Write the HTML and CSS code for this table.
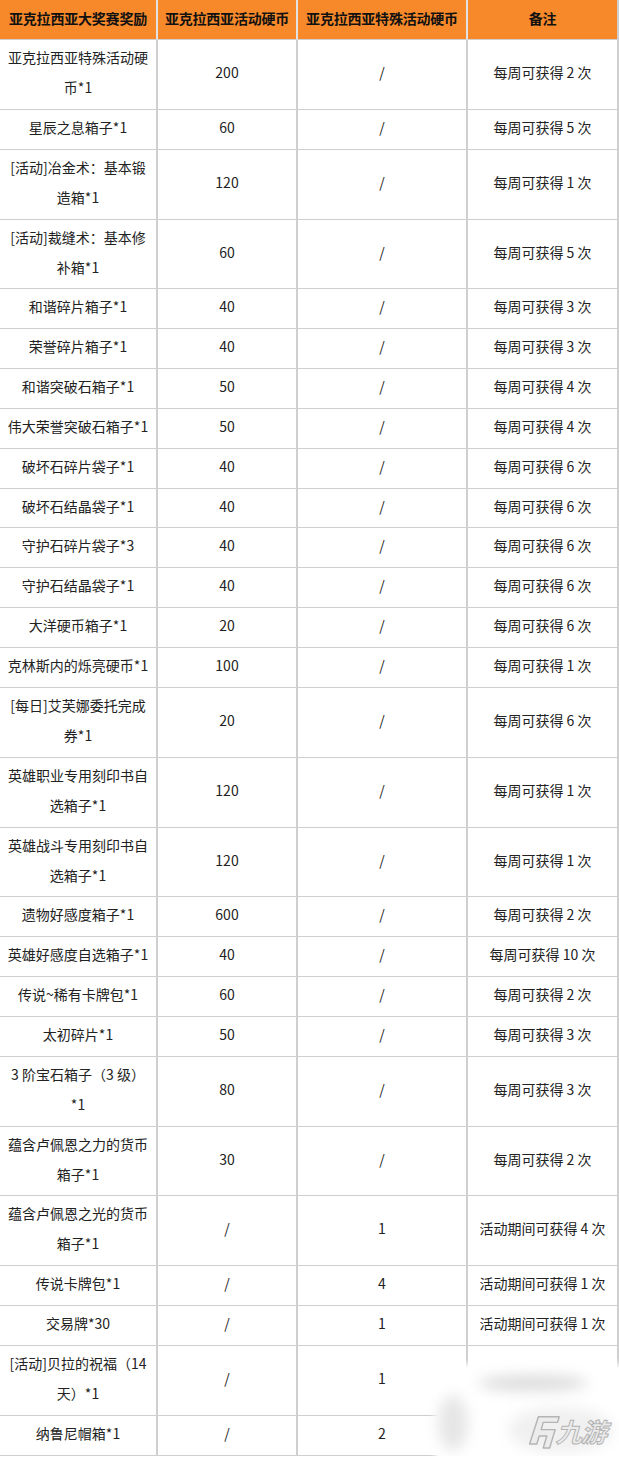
FILE: index.html
```html
<!DOCTYPE html>
<html lang="zh-CN">
<head>
<meta charset="utf-8">
<title>亚克拉西亚大奖赛奖励</title>
<link rel="stylesheet" href="styles.css">
</head>
<body>
<div class="page">
<table class="rewards">
  <colgroup>
    <col class="c1"><col class="c2"><col class="c3"><col class="c4">
  </colgroup>
  <thead>
    <tr><th>亚克拉西亚大奖赛奖励</th><th>亚克拉西亚活动硬币</th><th>亚克拉西亚特殊活动硬币</th><th>备注</th></tr>
  </thead>
  <tbody>
    <tr><td>亚克拉西亚特殊活动硬<br>币*1</td><td>200</td><td>/</td><td>每周可获得 2 次</td></tr>
    <tr><td>星辰之息箱子*1</td><td>60</td><td>/</td><td>每周可获得 5 次</td></tr>
    <tr><td>[活动]冶金术：基本锻<br>造箱*1</td><td>120</td><td>/</td><td>每周可获得 1 次</td></tr>
    <tr><td>[活动]裁缝术：基本修<br>补箱*1</td><td>60</td><td>/</td><td>每周可获得 5 次</td></tr>
    <tr><td>和谐碎片箱子*1</td><td>40</td><td>/</td><td>每周可获得 3 次</td></tr>
    <tr><td>荣誉碎片箱子*1</td><td>40</td><td>/</td><td>每周可获得 3 次</td></tr>
    <tr><td>和谐突破石箱子*1</td><td>50</td><td>/</td><td>每周可获得 4 次</td></tr>
    <tr><td>伟大荣誉突破石箱子*1</td><td>50</td><td>/</td><td>每周可获得 4 次</td></tr>
    <tr><td>破坏石碎片袋子*1</td><td>40</td><td>/</td><td>每周可获得 6 次</td></tr>
    <tr><td>破坏石结晶袋子*1</td><td>40</td><td>/</td><td>每周可获得 6 次</td></tr>
    <tr><td>守护石碎片袋子*3</td><td>40</td><td>/</td><td>每周可获得 6 次</td></tr>
    <tr><td>守护石结晶袋子*1</td><td>40</td><td>/</td><td>每周可获得 6 次</td></tr>
    <tr><td>大洋硬币箱子*1</td><td>20</td><td>/</td><td>每周可获得 6 次</td></tr>
    <tr><td>克林斯内的烁亮硬币*1</td><td>100</td><td>/</td><td>每周可获得 1 次</td></tr>
    <tr><td>[每日]艾芙娜委托完成<br>券*1</td><td>20</td><td>/</td><td>每周可获得 6 次</td></tr>
    <tr><td>英雄职业专用刻印书自<br>选箱子*1</td><td>120</td><td>/</td><td>每周可获得 1 次</td></tr>
    <tr><td>英雄战斗专用刻印书自<br>选箱子*1</td><td>120</td><td>/</td><td>每周可获得 1 次</td></tr>
    <tr><td>遗物好感度箱子*1</td><td>600</td><td>/</td><td>每周可获得 2 次</td></tr>
    <tr><td>英雄好感度自选箱子*1</td><td>40</td><td>/</td><td>每周可获得 10 次</td></tr>
    <tr><td>传说~稀有卡牌包*1</td><td>60</td><td>/</td><td>每周可获得 2 次</td></tr>
    <tr><td>太初碎片*1</td><td>50</td><td>/</td><td>每周可获得 3 次</td></tr>
    <tr><td>3 阶宝石箱子（3 级）<br>*1</td><td>80</td><td>/</td><td>每周可获得 3 次</td></tr>
    <tr><td>蕴含卢佩恩之力的货币<br>箱子*1</td><td>30</td><td>/</td><td>每周可获得 2 次</td></tr>
    <tr><td>蕴含卢佩恩之光的货币<br>箱子*1</td><td>/</td><td>1</td><td>活动期间可获得 4 次</td></tr>
    <tr><td>传说卡牌包*1</td><td>/</td><td>4</td><td>活动期间可获得 1 次</td></tr>
    <tr><td>交易牌*30</td><td>/</td><td>1</td><td>活动期间可获得 1 次</td></tr>
    <tr><td>[活动]贝拉的祝福（14<br>天）*1</td><td>/</td><td>1</td><td></td></tr>
    <tr><td>纳鲁尼帽箱*1</td><td>/</td><td>2</td><td></td></tr>
  </tbody>
</table>
<div class="watermark">
  <span class="smudge s1"></span>
  <span class="smudge s2"></span>
  <span class="smudge s3"></span>
  <svg class="wm-logo" viewBox="0 0 40 42" width="32" height="40" aria-hidden="true">
    <path d="M13 2 L39 2 L37 9 L19 9 L16.5 18 L34 18 L27 41 L19 41 L23.5 26 L14 26 L11 36 L2 36 Z" fill="#ececec" stroke="#b4b4b4" stroke-width="1.8" stroke-linejoin="round"/>
  </svg>
  <span class="wm-text">九游</span>
</div>
</div>
</body>
</html>
```
FILE: styles.css
```css
html, body {
  margin: 0;
  padding: 0;
  background: #fff;
}
.page {
  position: relative;
  width: 619px;
}
.rewards {
  width: 619px;
  table-layout: fixed;
  border-collapse: separate;
  border-spacing: 0;
  font-family: "Noto Sans CJK SC", "Noto Sans", sans-serif;
  font-size: 14px;
  color: #222;
}
.c1 { width: 158px; }
.c2 { width: 140px; }
.c3 { width: 170px; }
.c4 { width: 151px; }
.rewards th,
.rewards td {
  box-sizing: border-box;
  text-align: center;
  vertical-align: middle;
  line-height: 30px;
  padding: 2px 5px 6.85px;
  border-right: 2px solid #cfcfcf;
  border-bottom: 1px solid #cfcfcf;
  white-space: nowrap;
}
.rewards th {
  background: #f7892b;
  color: #111;
  font-weight: 700;
  padding: 3px 2px 6px;
  border-right-color: #e2e2e2;
  letter-spacing: -0.2px;
}
.rewards th:last-child {
  border-right-color: #cfcfcf;
}
.watermark {
  position: absolute;
  left: 438px;
  top: 1367px;
  width: 181px;
  height: 90px;
  background: #fff;
  box-shadow: 0 0 6px 3px #fff;
}
.smudge {
  position: absolute;
  border-radius: 50%;
  filter: blur(7px);
}
.s1 {
  left: 40px;
  top: 8px;
  width: 110px;
  height: 16px;
  background: #dcdcdc;
}
.s2 {
  left: 0;
  top: 28px;
  width: 30px;
  height: 56px;
  background: #e6e6e6;
}
.s3 {
  left: 70px;
  top: 40px;
  width: 105px;
  height: 46px;
  background: #f0f0f0;
}
.wm-logo {
  position: absolute;
  left: 90px;
  top: 45px;
}
.wm-text {
  position: absolute;
  left: 116px;
  top: 47px;
  font-family: "Noto Sans CJK SC", sans-serif;
  font-size: 26px;
  line-height: 34px;
  font-weight: 700;
  color: #ececec;
  -webkit-text-stroke: 1px #b4b4b4;
  transform: skewX(-16deg);
  transform-origin: left bottom;
  letter-spacing: -1px;
  white-space: nowrap;
}
```
